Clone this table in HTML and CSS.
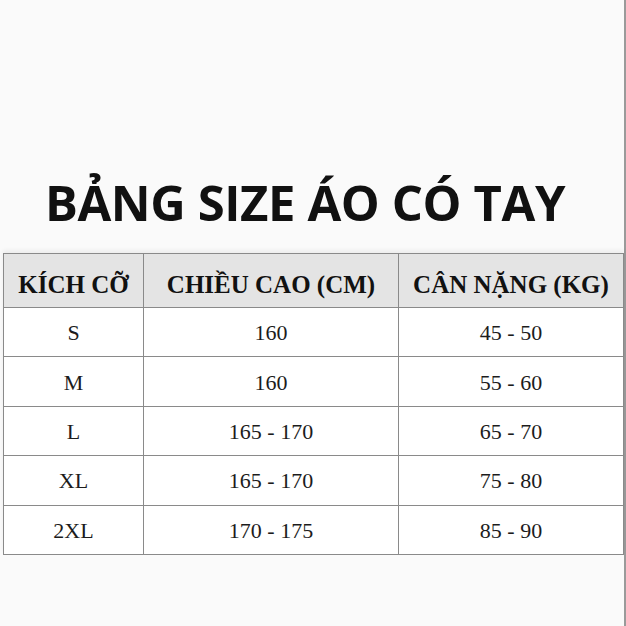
FILE: index.html
```html
<!DOCTYPE html>
<html lang="vi">
<head>
<meta charset="utf-8">
<link rel="stylesheet" href="styles.css">
</head>
<body>
<div class="page">
  <h1 class="title">BẢNG SIZE ÁO CÓ TAY</h1>
  <table class="size-table">
    <thead>
      <tr><th class="c1">KÍCH CỠ</th><th class="c2">CHIỀU CAO (CM)</th><th class="c3">CÂN NẶNG (KG)</th></tr>
    </thead>
    <tbody>
      <tr><td>S</td><td>160</td><td>45 - 50</td></tr>
      <tr><td>M</td><td>160</td><td>55 - 60</td></tr>
      <tr><td>L</td><td>165 - 170</td><td>65 - 70</td></tr>
      <tr><td>XL</td><td>165 - 170</td><td>75 - 80</td></tr>
      <tr><td>2XL</td><td>170 - 175</td><td>85 - 90</td></tr>
    </tbody>
  </table>
</div>
</body>
</html>
```
FILE: styles.css
```css
html, body {
  margin: 0;
  padding: 0;
  background: #fafafa;
}
.page {
  width: 626px;
  height: 626px;
  box-sizing: border-box;
  border-right: 2px solid #9a9a9a;
  padding-top: 168px;
}
.title {
  margin: 0;
  height: 85px;
  padding-right: 14px;
  text-align: center;
  font-family: "Open Sans", sans-serif;
  font-weight: 700;
  font-size: 49px;
  line-height: 68px;
  color: #111;
  letter-spacing: -0.4px;
}
.size-table {
  margin-left: 3px;
  border-collapse: collapse;
  font-family: "Liberation Serif", serif;
  color: #1c1c1c;
  box-shadow: 0 -3px 4px rgba(0,0,0,0.05);
}
.size-table th, .size-table td {
  border: 1px solid #8a8a8a;
  text-align: center;
  padding: 0;
}
.size-table th {
  background: #e4e4e4;
  font-weight: 700;
  font-size: 25px;
  height: 54px;
  padding-top: 8px;
  box-sizing: border-box;
  color: #111;
}
.size-table td {
  background: #fff;
  font-size: 22px;
  height: 49.4px;
  padding-top: 2px;
  box-sizing: border-box;
}
.c1 { width: 140px; }
.c2 { width: 255px; }
.c3 { width: 225px; }
```
